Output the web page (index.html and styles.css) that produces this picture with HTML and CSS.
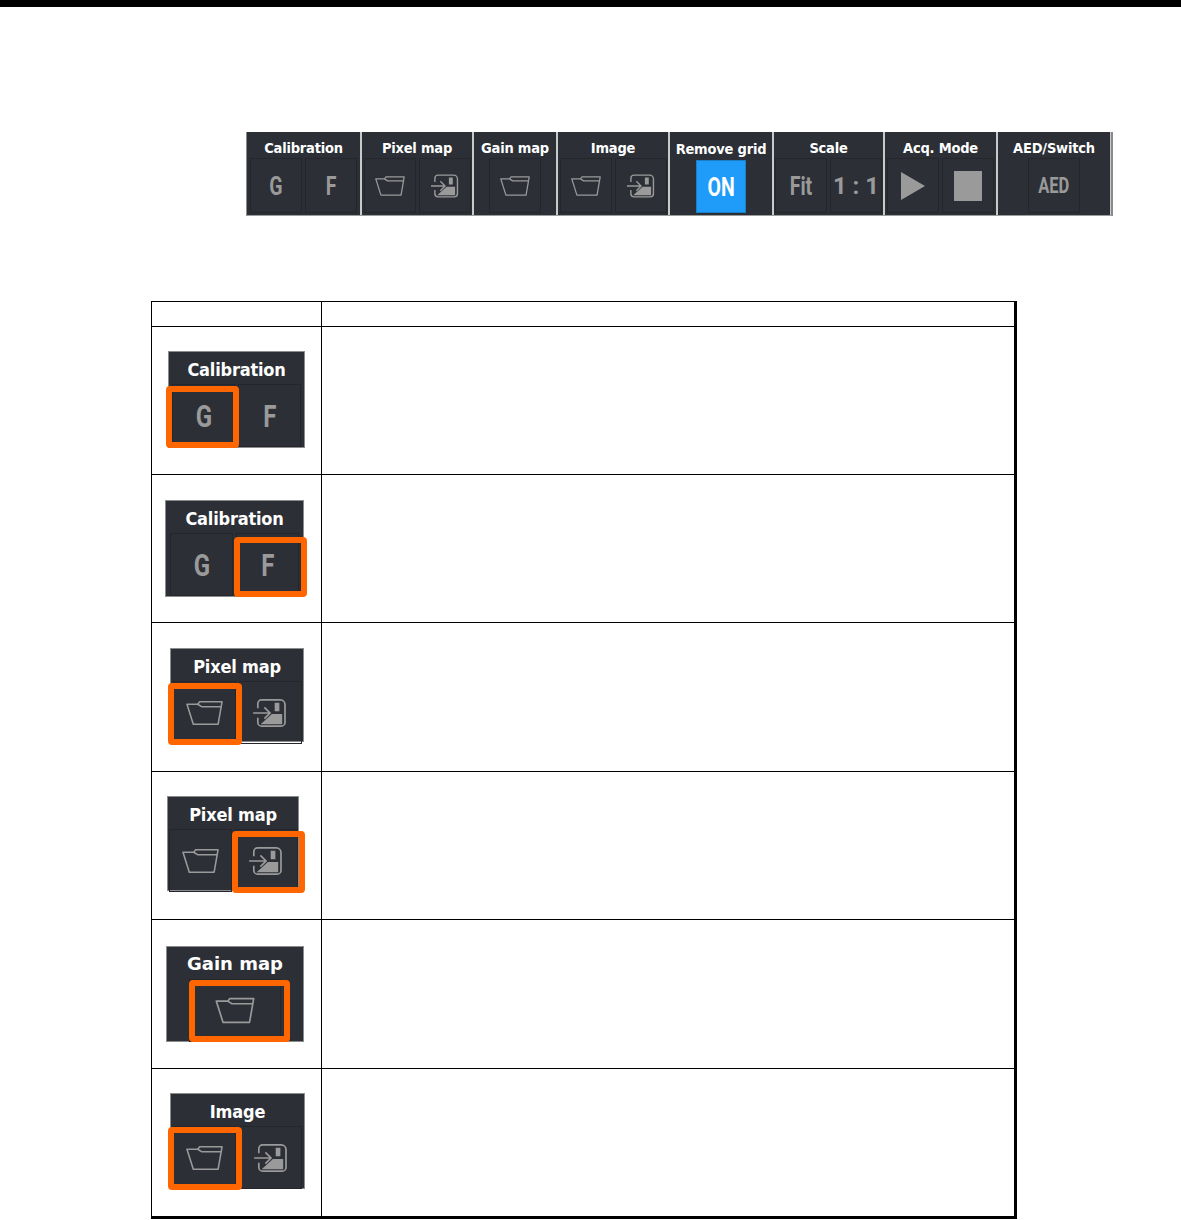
FILE: index.html
```html
<!DOCTYPE html>
<html lang="en">
<head>
    <meta charset="UTF-8">
    <title>Toolbar buttons</title>
    <link rel="stylesheet" href="styles.css">
</head>
<body>
    <svg class="defs" width="0" height="0">
        <symbol id="folder" viewBox="0 0 38 26">
            <path d="M1 4H12L14 1.5H37L33 24.5H7.5ZM12 4L16 6.5H36" fill="none" stroke="currentColor" stroke-width="1.6" stroke-linejoin="round"/>
        </symbol>
        <symbol id="load" viewBox="0 0 36 32">
            <path d="M5 11V6A4 4 0 0 1 9 2H29A5 5 0 0 1 34 7V26A4 4 0 0 1 30 30H9A4 4 0 0 1 5 26V21" fill="none" stroke="currentColor" stroke-width="1.8"/>
            <path d="M0 16H17M12 10L18 16L12 22" fill="none" stroke="currentColor" stroke-width="1.8"/>
            <path d="M8 28L20 17H31V28Z M23 5H28V14H23Z" fill="currentColor"/>
        </symbol>
    </svg>

    <div class="top-rule"></div>

    <div class="toolbar">
        <div class="group">
            <div class="group-title">Calibration</div>
            <div class="group-btns">
                <div class="btn"><span class="cond">G</span></div>
                <div class="btn"><span class="cond">F</span></div>
            </div>
        </div>
        <div class="group">
            <div class="group-title">Pixel map</div>
            <div class="group-btns">
                <div class="btn"><svg class="ico-folder"><use href="#folder"/></svg></div>
                <div class="btn"><svg class="ico-load"><use href="#load"/></svg></div>
            </div>
        </div>
        <div class="group">
            <div class="group-title">Gain map</div>
            <div class="group-btns">
                <div class="btn"><svg class="ico-folder"><use href="#folder"/></svg></div>
            </div>
        </div>
        <div class="group">
            <div class="group-title">Image</div>
            <div class="group-btns">
                <div class="btn"><svg class="ico-folder"><use href="#folder"/></svg></div>
                <div class="btn"><svg class="ico-load"><use href="#load"/></svg></div>
            </div>
        </div>
        <div class="group">
            <div class="group-title title-low">Remove grid</div>
            <div class="group-btns">
                <div class="btn btn-on"><span class="cond">ON</span></div>
            </div>
        </div>
        <div class="group">
            <div class="group-title">Scale</div>
            <div class="group-btns">
                <div class="btn"><span class="cond">Fit</span></div>
                <div class="btn"><span class="cond wide">1 : 1</span></div>
            </div>
        </div>
        <div class="group">
            <div class="group-title">Acq. Mode</div>
            <div class="group-btns">
                <div class="btn"><div class="play"></div></div>
                <div class="btn"><div class="stop"></div></div>
            </div>
        </div>
        <div class="group">
            <div class="group-title">AED/Switch</div>
            <div class="group-btns">
                <div class="btn"><span class="cond small">AED</span></div>
            </div>
        </div>
    </div>

    <table class="desc">
        <tr class="head"><td class="col-icon"></td><td></td></tr>
        <tr>
            <td>
                <div class="panel panel-g">
                    <div class="panel-title">Calibration</div>
                    <div class="panel-btns">
                        <div class="pbtn"><span class="cond">G</span></div>
                        <div class="pbtn"><span class="cond">F</span></div>
                    </div>
                    <div class="mark mark-g"></div>
                </div>
            </td>
            <td></td>
        </tr>
        <tr>
            <td>
                <div class="panel panel-f">
                    <div class="panel-title">Calibration</div>
                    <div class="panel-btns">
                        <div class="pbtn"><span class="cond">G</span></div>
                        <div class="pbtn"><span class="cond">F</span></div>
                    </div>
                    <div class="mark mark-f"></div>
                </div>
            </td>
            <td></td>
        </tr>
        <tr class="tall">
            <td>
                <div class="panel panel-pix1">
                    <div class="panel-title">Pixel map</div>
                    <div class="panel-btns">
                        <div class="pbtn"><svg class="ico-folder"><use href="#folder"/></svg></div>
                        <div class="pbtn"><svg class="ico-load"><use href="#load"/></svg></div>
                    </div>
                    <div class="mark mark-pix1"></div>
                </div>
            </td>
            <td></td>
        </tr>
        <tr>
            <td>
                <div class="panel panel-pix2">
                    <div class="panel-title">Pixel map</div>
                    <div class="panel-btns">
                        <div class="pbtn"><svg class="ico-folder"><use href="#folder"/></svg></div>
                        <div class="pbtn"><svg class="ico-load"><use href="#load"/></svg></div>
                    </div>
                    <div class="mark mark-pix2"></div>
                </div>
            </td>
            <td></td>
        </tr>
        <tr class="tall">
            <td>
                <div class="panel panel-gain">
                    <div class="panel-title title-wide">Gain map</div>
                    <div class="panel-btns btns-center">
                        <div class="pbtn pbtn-gain"><svg class="ico-folder"><use href="#folder"/></svg></div>
                    </div>
                    <div class="mark mark-gain"></div>
                </div>
            </td>
            <td></td>
        </tr>
        <tr>
            <td>
                <div class="panel panel-img">
                    <div class="panel-title">Image</div>
                    <div class="panel-btns">
                        <div class="pbtn"><svg class="ico-folder"><use href="#folder"/></svg></div>
                        <div class="pbtn"><svg class="ico-load"><use href="#load"/></svg></div>
                    </div>
                    <div class="mark mark-img"></div>
                </div>
            </td>
            <td></td>
        </tr>
    </table>
</body>
</html>
```
FILE: styles.css
```css
html, body {
    height: 1220px;
    overflow: hidden;
}
body {
    margin: 0;
    background-color: #fff;
    font-family: "DejaVu Sans", "Liberation Sans", sans-serif;
}
.defs {
    display: block;
    height: 0;
}
.top-rule {
    height: 7px;
    background-color: #000;
}

/* toolbar */
.toolbar {
    display: grid;
    grid-template-columns: 113px 110px 82px 110px 102px 109px 111px 112px;
    column-gap: 2px;
    width: 864px;
    height: 83px;
    margin: 125px 0 0 246px;
    border-left: 1px solid #8a8a8a;
    border-right: 2px solid #8a8a8a;
    border-bottom: 1px solid #9c9c9c;
    background-color: #c9c9c9;
}
.group {
    display: flex;
    flex-direction: column;
    background-color: #2c2f36;
}
.group-title {
    height: 26px;
    line-height: 32px;
    text-align: center;
    white-space: nowrap;
    color: #fff;
    font-size: 14.5px;
    font-weight: bold;
    font-stretch: condensed;
    letter-spacing: -0.2px;
}
.title-low {
    line-height: 34px;
}
.group-btns {
    display: flex;
    justify-content: center;
    gap: 3px;
}
.btn {
    display: flex;
    align-items: center;
    justify-content: center;
    box-sizing: border-box;
    width: 52px;
    height: 55px;
    border: 1px solid #24262b;
    color: #9a9a9a;
    font-size: 26px;
    font-family: Roboto, "Liberation Sans", sans-serif;
    font-weight: bold;
}
.btn-on {
    width: 50px;
    height: 53px;
    margin-top: 2px;
    border-color: #1a7fc4;
    background-color: #1f9bfa;
    color: #fff;
}
.cond {
    display: inline-block;
    transform: scaleX(0.75);
}
.wide {
    transform: none;
    font-size: 24px;
    white-space: nowrap;
}
.small {
    font-size: 22px;
}
.ico-folder {
    width: 30px;
    height: 22px;
}
.ico-load {
    width: 28px;
    height: 26px;
}
.play {
    width: 0;
    height: 0;
    border-left: 24px solid #9a9a9a;
    border-top: 14px solid transparent;
    border-bottom: 14px solid transparent;
}
.stop {
    width: 28px;
    height: 30px;
    background-color: #9a9a9a;
}

/* description table */
.desc {
    table-layout: fixed;
    width: 866px;
    margin: 85px 0 0 151px;
    border-collapse: separate;
    border-spacing: 0;
    border-right: 3px solid #000;
    border-bottom: 3px solid #000;
}
.desc tr {
    height: 148px;
}
.desc tr.tall {
    height: 149px;
}
.desc tr.head {
    height: 25px;
}
.desc td {
    padding: 0;
    border-left: 1px solid #000;
    border-top: 1px solid #000;
    vertical-align: top;
}
.col-icon {
    width: 169px;
}

/* screenshot crops inside the table */
.panel {
    position: relative;
    box-sizing: border-box;
    display: flex;
    flex-direction: column;
    border: 1px solid #8c8c8c;
    background-color: #2c2f36;
}
.panel-title {
    height: 32px;
    line-height: 35px;
    text-align: center;
    white-space: nowrap;
    color: #fff;
    font-size: 18px;
    font-weight: bold;
    font-stretch: condensed;
    letter-spacing: -0.2px;
}
.title-wide {
    font-stretch: normal;
    letter-spacing: 0;
    line-height: 34px;
}
.panel-btns {
    display: flex;
    justify-content: center;
    gap: 3px;
}
.pbtn {
    display: flex;
    align-items: center;
    justify-content: center;
    box-sizing: border-box;
    flex: 0 0 63px;
    height: 63px;
    border: 1px solid #24262b;
    color: #9a9a9a;
    font-size: 32px;
    font-family: Roboto, "Liberation Sans", sans-serif;
    font-weight: bold;
}
.pbtn .ico-folder {
    width: 37px;
    height: 26px;
}
.pbtn .ico-load {
    width: 34px;
    height: 30px;
}
.pbtn-gain {
    flex-basis: 92px;
}
.pbtn-gain .ico-folder {
    width: 50px;
    height: 27px;
}
.panel-g { width: 137px; height: 97px; margin: 24px 0 0 16px; }
.panel-f { width: 139px; height: 97px; margin: 25px 0 0 13px; }
.panel-pix1 { width: 134px; height: 94px; margin: 25px 0 0 18px; }
.panel-pix2 { width: 132px; height: 95px; margin: 24px 0 0 15px; }
.panel-gain { width: 138px; height: 96px; margin: 26px 0 0 14px; }
.panel-img { width: 135px; height: 96px; margin: 24px 0 0 18px; }

.mark {
    position: absolute;
    box-sizing: border-box;
    border: 6px solid #ff6600;
    border-radius: 4px;
}
.mark-g { left: -3px; top: 34px; width: 73px; height: 62px; }
.mark-f { left: 68px; top: 36px; width: 73px; height: 60px; }
.mark-pix1 { left: -3px; top: 34px; width: 74px; height: 62px; }
.mark-pix2 { left: 64px; top: 34px; width: 73px; height: 62px; }
.mark-gain { left: 22px; top: 33px; width: 101px; height: 62px; }
.mark-img { left: -3px; top: 33px; width: 74px; height: 63px; }
```
